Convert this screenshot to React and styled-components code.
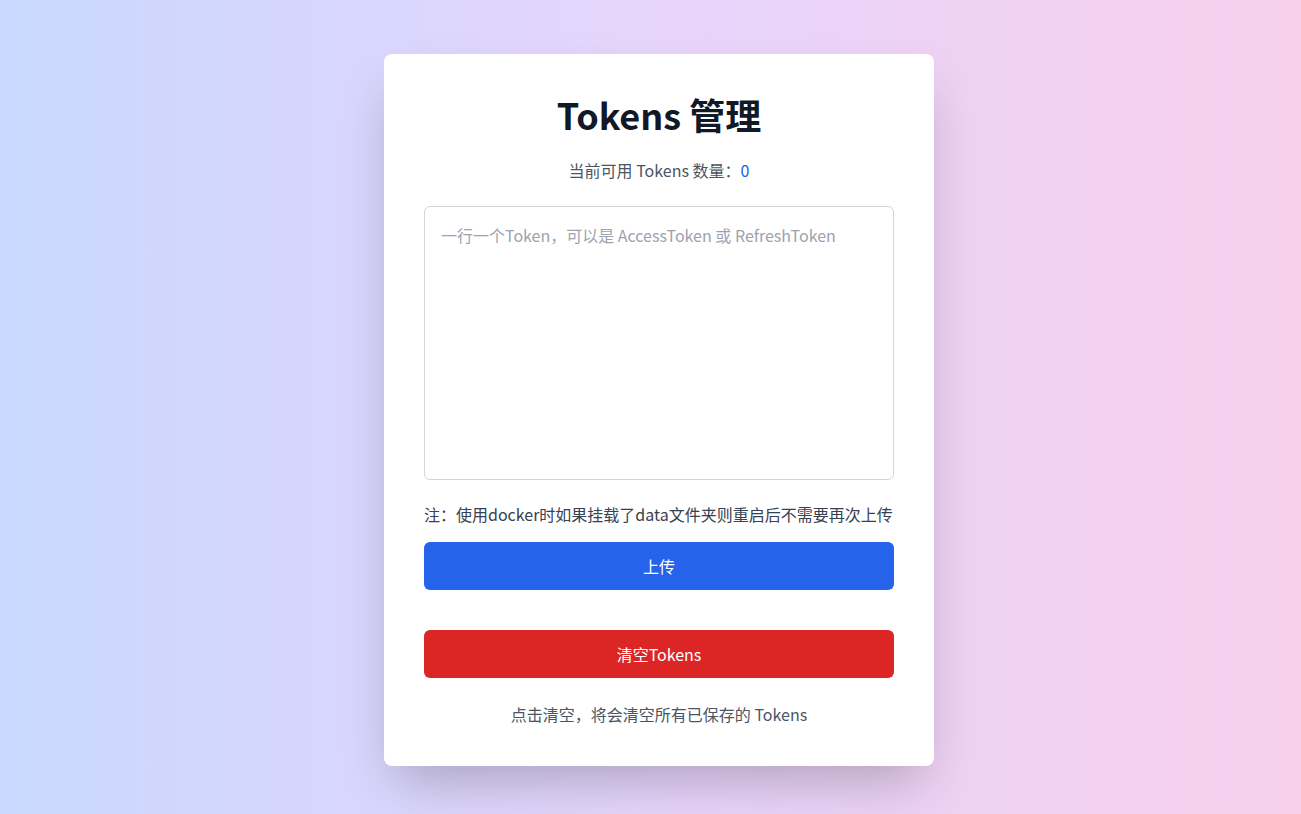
import React, { useState } from 'react';
import styled, { createGlobalStyle } from 'styled-components';

const GlobalStyle = createGlobalStyle`
  html, body {
    margin: 0;
    padding: 0;
  }
  body {
    font-family: "Noto Sans CJK SC", "Noto Sans", sans-serif;
    -webkit-font-smoothing: antialiased;
  }
  * {
    box-sizing: border-box;
  }
`;

const Page = styled.div`
  min-height: 100vh;
  padding: 6px 0 0 17px;
  display: flex;
  align-items: center;
  justify-content: center;
  background: linear-gradient(90deg, #c8d8fe 0%, #e7d5fd 50%, #f7cfeb 100%);
`;

const Card = styled.div`
  width: 550px;
  background: #ffffff;
  border-radius: 8px;
  padding: 40px;
  box-shadow: 0 25px 50px -12px rgba(0, 0, 0, 0.25);
  display: flex;
  flex-direction: column;
`;

const Title = styled.h1`
  margin: 0 0 24px;
  font-size: 36px;
  line-height: 40px;
  font-weight: 700;
  color: #111827;
  text-align: center;
`;

const Count = styled.p`
  margin: 0 0 24px;
  font-size: 16px;
  line-height: 24px;
  color: #4b5563;
  text-align: center;
`;

const CountValue = styled.span`
  color: #2563eb;
`;

const TokenInput = styled.textarea`
  display: block;
  width: 100%;
  height: 274px;
  padding: 16px;
  border: 1px solid #d1d5db;
  border-radius: 6px;
  font-family: inherit;
  font-size: 16px;
  line-height: 24px;
  color: #111827;
  resize: none;
  outline: none;

  &::placeholder {
    color: #9ca3af;
  }
`;

const Note = styled.p`
  margin: 22px 0 16px;
  font-size: 16px;
  line-height: 24px;
  color: #374151;
  white-space: nowrap;
`;

const ActionButton = styled.button`
  width: 100%;
  height: 48px;
  border: none;
  border-radius: 6px;
  background: ${(p) => (p.$danger ? '#dc2626' : '#2563eb')};
  color: #ffffff;
  font-family: inherit;
  font-size: 16px;
  cursor: pointer;
  margin-bottom: ${(p) => p.$gap || 0}px;
`;

const Hint = styled.p`
  margin: 24px 0 0;
  font-size: 16px;
  line-height: 24px;
  color: #4b5563;
  text-align: center;
`;

export default function App() {
  const [tokens, setTokens] = useState('');
  const [count] = useState(0);

  return (
    <>
      <GlobalStyle />
      <Page>
        <Card>
          <Title>Tokens 管理</Title>
          <Count>
            当前可用 Tokens 数量：<CountValue>{count}</CountValue>
          </Count>
          <TokenInput
            value={tokens}
            onChange={(e) => setTokens(e.target.value)}
            placeholder="一行一个Token，可以是 AccessToken 或 RefreshToken"
          />
          <Note>注：使用docker时如果挂载了data文件夹则重启后不需要再次上传</Note>
          <ActionButton $gap={40}>上传</ActionButton>
          <ActionButton $danger>清空Tokens</ActionButton>
          <Hint>点击清空，将会清空所有已保存的 Tokens</Hint>
        </Card>
      </Page>
    </>
  );
}
